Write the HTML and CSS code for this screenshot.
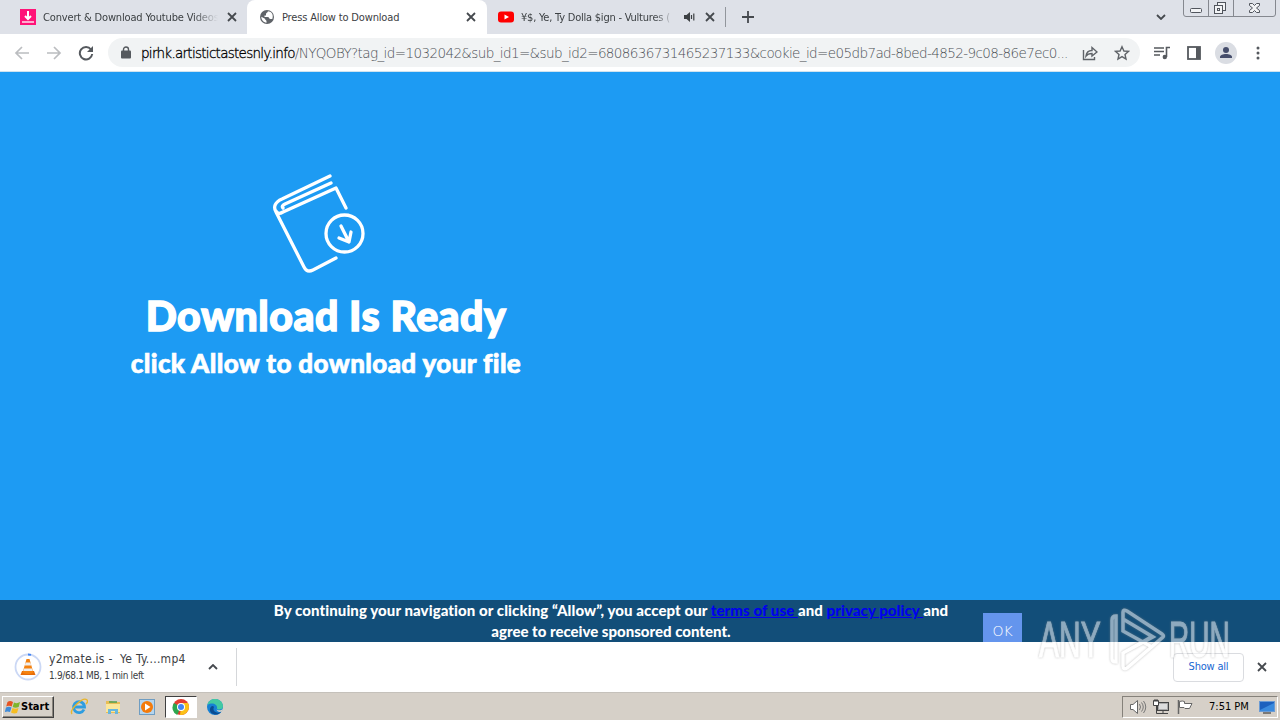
FILE: index.html
```html
<!DOCTYPE html>
<html lang="en">
<head>
    <meta charset="UTF-8">
    <meta name="viewport" content="width=device-width, initial-scale=1.0">
    <title>Press Allow to Download</title>
    <link rel="stylesheet" href="styles.css">
</head>
<body>
    <!-- Tabs -->
    <div class="tabs">
        <div class="tab tab-first">
            <svg class="favicon" width="16" height="16" viewBox="0 0 16 16"><rect width="16" height="16" fill="#ff1478"/><path d="M8 2v7M5 7l3 3 3-3" fill="none" stroke="#fff" stroke-width="2"/><path d="M2 13h12" stroke="#fff" stroke-width="1.3"/></svg>
            <span class="tab-title fade">Convert &amp; Download Youtube Videos</span>
            <svg class="close" width="10" height="10" viewBox="0 0 10 10"><path d="M1 1l8 8M9 1L1 9"/></svg>
        </div>
        <div class="tab tab-active">
            <svg class="favicon" width="16" height="16" viewBox="0 0 16 16"><circle cx="8" cy="8" r="7" fill="#5f6368"/><path d="M9 2.300C8.500 4 7 3.500 7 5v1.500H5.500V8H9c1 0 1 2 2.500 2h1.800c1-2.500.5-6-2.300-7.200zM2.300 7.800c0 3 2 5.500 5.200 6v-1.600C7.500 11 6 11 6 9.800z" fill="#fff"/></svg>
            <span class="tab-title">Press Allow to Download</span>
            <svg class="close" width="10" height="10" viewBox="0 0 10 10"><path d="M1 1l8 8M9 1L1 9"/></svg>
        </div>
        <div class="tab tab-last">
            <svg class="favicon" width="16" height="16" viewBox="0 0 16 16"><rect y="2.500" width="16" height="11" rx="3" fill="#f00"/><path d="M6.500 5.500v5L11 8z" fill="#fff"/></svg>
            <span class="tab-title fade">¥$, Ye, Ty Dolla $ign - Vultures (</span>
            <svg class="sound" width="12" height="10" viewBox="0 0 12 10"><path d="M0 3h2.500L6 0v10L2.500 7H0z" fill="#3c4043"/><path d="M7.500 3v4M9.800 1.500v7" stroke="#3c4043" stroke-width="1.200"/></svg>
            <svg class="close" width="10" height="10" viewBox="0 0 10 10"><path d="M1 1l8 8M9 1L1 9"/></svg>
        </div>
        <div class="tab-divider"></div>
        <svg class="new-tab" width="12" height="12" viewBox="0 0 12 12"><path d="M6 0v12M0 6h12"/></svg>
        <svg class="tab-search" width="10" height="6" viewBox="0 0 10 6"><path d="M1 1l4 4 4-4"/></svg>
        <svg class="window-buttons" width="94" height="17" viewBox="0 0 94 17">
            <path d="M.5 0v14q0 2.500 2.500 2.500h87q2.500 0 2.500-2.500V0M25.500 0v16M50.500 0v16" fill="none" stroke="#85888f"/>
            <g fill="#f2f3f5" stroke="#51555d">
                <rect x="7.500" y="8.500" width="11" height="4" rx="1"/>
                <rect x="34.500" y="2.500" width="8" height="8"/><rect x="31.500" y="5.500" width="8" height="8"/><rect x="34.500" y="8.500" width="2" height="2"/>
                <path d="M66.500 3.500h3l2 2 2-2h3v2l-3 2.500 3 2.500v2h-3l-2-2-2 2h-3v-2l3-2.500-3-2.500z"/>
            </g>
        </svg>
    </div>

    <!-- Address bar -->
    <div class="toolbar">
        <svg class="nav" width="16" height="16" viewBox="0 0 16 16"><path d="M15 8H2M8 2L2 8l6 6"/></svg>
        <svg class="nav" width="16" height="16" viewBox="0 0 16 16"><path d="M1 8h13M8 2l6 6-6 6"/></svg>
        <svg class="reload" width="16" height="16" viewBox="0 0 16 16"><path d="M13 4.500A6.200 6.200 0 1 0 14.200 9" fill="none" stroke="#55595e" stroke-width="2"/><path d="M15 1v6H9z" fill="#55595e"/></svg>
        <div class="address">
            <svg width="10" height="13" viewBox="0 0 10 13"><rect y="4.500" width="10" height="8" rx="1" fill="#55595e"/><path d="M2.500 5V3.500a2.500 2.500 0 0 1 5 0V5" fill="none" stroke="#55595e" stroke-width="1.400"/></svg>
            <div class="url"><span class="host">pirhk.artistictastesnly.info</span><span class="path">/NYQOBY?tag_id=1032042&amp;sub_id1=&amp;sub_id2=6808636731465237133&amp;cookie_id=e05db7ad-8bed-4852-9c08-86e7ec0...</span></div>
            <svg class="share" width="16" height="16" viewBox="0 0 16 16"><path d="M1.500 5v9.500h11V12M4 11c.5-4 2.500-5.500 6-5.500V2.500L15 7l-5 4V8.500c-3 0-4.500.5-6 2.500z"/></svg>
            <svg class="star" width="16" height="16" viewBox="0 0 16 16"><path d="M8 1.800l1.900 4.200 4.500.4L11 9.500l1 4.500-4-2.400L4 14l1-4.500L1.600 6.400l4.500-.4z"/></svg>
        </div>
        <svg class="tool-icon" width="18" height="16" viewBox="0 0 18 16"><path d="M1 3h10M1 6.500h10M1 10h6M13.500 12V2.500H17" fill="none" stroke="#55595e" stroke-width="1.600"/><circle cx="11.800" cy="12" r="2.200" fill="#55595e"/></svg>
        <svg class="tool-icon" width="14" height="14" viewBox="0 0 14 14"><rect x="1" y="1" width="12" height="12" fill="#fff" stroke="#55595e" stroke-width="1.800"/><path d="M9 1h4v12H9z" fill="#55595e"/></svg>
        <svg class="avatar" width="22" height="22" viewBox="0 0 22 22"><circle cx="11" cy="11" r="11" fill="#dadde3"/><circle cx="11" cy="8" r="3" fill="#454d6b"/><path d="M5 16v-1c0-4 12-4 12 0v1z" fill="#454d6b"/></svg>
        <svg class="menu" width="4" height="14" viewBox="0 0 4 14"><g fill="#55595e"><circle cx="2" cy="2" r="1.500"/><circle cx="2" cy="7" r="1.500"/><circle cx="2" cy="12" r="1.500"/></g></svg>
    </div>

    <!-- Page -->
    <div class="page">
        <div class="message">
            <svg class="book" width="94" height="100" viewBox="0 0 94 100">
                <path d="M58 3L10 26C3 29 1 34 4 39l28 55c2 4 5 5 9 3l23-12M4 38q2 4 7 1l53-24 10 20M59 10L13 31q-4 2-2 4"/>
                <circle cx="72.500" cy="60.500" r="18.500"/>
                <path d="M69 53l8 16M67 65l10 4 2-10"/>
            </svg>
            <h1>Download Is Ready</h1>
            <h2>click Allow to download your file</h2>
        </div>
        <div class="consent">
            <p><span class="line line-top">By continuing your navigation or clicking “Allow”, you accept our <a href="#">terms of use </a>and <a href="#">privacy policy </a>and</span><span class="line line-bottom">agree to receive sponsored content.</span></p>
            <button class="ok">OK</button>
        </div>
    </div>

    <!-- Downloads -->
    <div class="downloads">
        <svg class="vlc" width="28" height="28" viewBox="0 0 28 28">
            <circle cx="14" cy="14" r="12.500" fill="#fff" stroke="#cbd8f5" stroke-width="1.800"/><path d="M14 1.500a12.500 12.500 0 0 1 3 .4" fill="none" stroke="#4285f4" stroke-width="1.800"/>
            <path d="M8 18h12l1.500 4h-15z" fill="#e76b08"/><path d="M12.500 6h3l4 14q-5.500 2-11 0z" fill="#f58210"/><path d="M11.600 9.500h4.800l.8 3h-6.400zM10 15.500h8l.7 2.500H9.300z" fill="#eee"/>
        </svg>
        <div class="file">
            <div class="file-name">y2mate.is -&nbsp; Ye Ty....mp4</div>
            <div class="file-info">1.9/68.1 MB, 1 min left</div>
        </div>
        <svg class="chevron" width="10" height="6" viewBox="0 0 10 6"><path d="M1 5l4-4 4 4"/></svg>
        <div class="divider"></div>
        <button class="show-all">Show all</button>
        <svg class="shelf-close" width="10" height="10" viewBox="0 0 10 10"><path d="M1 1l8 8M9 1L1 9"/></svg>
    </div>

    <!-- Taskbar -->
    <div class="taskbar">
        <div class="start">
            <svg width="16" height="16" viewBox="0 0 16 16"><path d="M2.500 3Q5 1 8 3L6.700 7.500Q4 6 1.200 7.500z" fill="#e65322"/><path d="M9 3.500q3 1.500 6-.5L13.700 8Q10.500 9.500 7.700 8z" fill="#7eb52c"/><path d="M1 8.500q3-1.500 5.500 0L5 13Q2.500 12-.2 13z" fill="#3f8bd8"/><path d="M7.500 9q3 1.500 6 0L12 14q-3 1-6-.5z" fill="#f6bd22"/></svg>
            <span>Start</span>
        </div>
        <svg class="task" width="18" height="18" viewBox="0 0 18 18"><path d="M14 11.500A5.500 5.500 0 1 1 14.500 9H5" fill="none" stroke="#2e9de0" stroke-width="2.800"/><path d="M2 16C-1 12 13-2 17 2c1 1 0 3-1 4" fill="none" stroke="#e9b62b" stroke-width="1.400"/></svg>
        <svg class="task" width="18" height="18" viewBox="0 0 18 18"><path d="M2 3h6l1 1h7v11H2z" fill="#e8bd55"/><path d="M2 6h14v8H2z" fill="#fbe79b"/><path d="M4 16v-5h10v5h-3v-3H7v3z" fill="#68b7dd"/><path d="M5 4h8" stroke="#4f9f53" stroke-width="1.500"/></svg>
        <svg class="task" width="18" height="18" viewBox="0 0 18 18"><rect x="1.500" y="1.500" width="15" height="15" fill="#b5d5ee" stroke="#6f9dc2"/><circle cx="9" cy="9" r="6" fill="#f47b0b"/><path d="M7 5.500v7L12.500 9z" fill="#fff"/></svg>
        <div class="task-active">
            <svg width="18" height="18" viewBox="0 0 18 18"><circle cx="9" cy="9" r="8" fill="#e43d30"/><path d="M9 9L5.200 17A8 8 0 0 1 2 5z" fill="#2da64f"/><path d="M9 9h8a8 8 0 0 1-9 8z" fill="#fbc116"/><path d="M9 5h7a8 8 0 0 1 1 4l-5 1z" fill="#fbc116"/><circle cx="9" cy="9" r="4" fill="#fff"/><circle cx="9" cy="9" r="3" fill="#4285f4"/></svg>
        </div>
        <svg class="task" width="18" height="18" viewBox="0 0 18 18"><circle cx="9" cy="9" r="8" fill="#1680d4"/><path d="M1.500 7C3-1 16-1 17 8c0 4-4 4-6 3 1-5-5-7-9.500-4z" fill="#43c9a2"/><path d="M8 9c-2 4 2 7 7 5-4 5-12 2-11-3 .5-3 3-4 4-2z" fill="#0b4c92"/><path d="M10.500 11.500c2 1.500 5 1 6.500-1l-1 3c-3 1-5 0-5.500-2z" fill="#d6d2c9"/></svg>
        <div class="tray">
            <svg width="18" height="16" viewBox="0 0 18 16"><path d="M1.500 5.500H4L8.500 1.500v13L4 10.500H1.500z" fill="#fff" stroke="#666"/><path d="M10.500 5q2 3 0 6M12.500 3.500q3.500 4.500 0 9M14.500 2q4.500 6 0 12" fill="none" stroke="#777"/></svg>
            <svg width="18" height="16" viewBox="0 0 18 16"><rect x="4.500" y="3.500" width="11" height="8" fill="#aaa" stroke="#444"/><rect x="6" y="5" width="8" height="5" fill="#ddd"/><path d="M7 14.500h8M10 12v2M3.500 6v8.500H8" stroke="#444" fill="none"/><path d="M.5 1.500h5v5h-5zM2 0v3M4 0v3" fill="#fff" stroke="#444"/></svg>
            <svg width="18" height="16" viewBox="0 0 18 16"><path d="M1.500 1v14" stroke="#666" stroke-width="1.500"/><path d="M2.500 2.500q3-1 5 0v2h7.500l-2.500 5H8L7 8.500H2.500z" fill="#fff" stroke="#666"/></svg>
            <span class="clock">7:51 PM</span>
            <svg class="desktop" width="16" height="14" viewBox="0 0 16 14"><rect x=".5" y="1.500" width="15" height="10" fill="#1d61be" stroke="#6b9bd4"/><path d="M1 10l14-7v8H1z" fill="#3b8bde"/><path d="M4 13h8" stroke="#222"/></svg>
        </div>
    </div>

    <!-- Watermark -->
    <div class="watermark">
        <span class="any">ANY</span>
        <svg width="60" height="66" viewBox="0 0 60 66"><path d="M8 55V9q-4 0-4 4v39q0 3 4 3zM15 5v19l29 16M15 5q0-3 4-1l35 23q3 2 0 4L19 61q-4 2-4-2V46l30-16-30-18M15 46l30-17"/></svg>
        <span class="run">RUN</span>
    </div>
</body>
</html>
```
FILE: styles.css
```css
* {
    box-sizing: border-box;
}
body {
    margin: 0;
    width: 1280px;
    height: 720px;
    overflow: hidden;
    display: flex;
    flex-direction: column;
    font-family: "DejaVu Sans Condensed", "DejaVu Sans", sans-serif;
    font-size: 11px;
    color: #3c4043;
    position: relative;
}
svg {
    flex: none;
    display: block;
}
/* Tabs */
.tabs {
    height: 34px;
    background-color: #dee1e8;
    display: flex;
    align-items: center;
}
.tab {
    height: 34px;
    display: flex;
    align-items: center;
}
.tab-first {
    width: 247px;
    padding: 0 10px 0 20px;
}
.tab-active {
    width: 240px;
    padding: 0 11px 0 12px;
    background-color: #fff;
    border-radius: 8px 8px 0 0;
}
.tab-last {
    width: 238px;
    padding: 0 10px 0 11px;
}
.tab-title {
    flex: 1;
    margin-left: 7px;
    white-space: nowrap;
    overflow: hidden;
    letter-spacing: -0.16px;
}
.tab-last .tab-title {
    letter-spacing: -0.22px;
}
.fade {
    -webkit-mask-image: linear-gradient(to right, #000 86%, transparent);
    mask-image: linear-gradient(to right, #000 86%, transparent);
}
.close {
    margin-left: 9px;
}
.sound {
    margin-left: 9px;
}
.close path, .shelf-close path, .new-tab path, .tab-search path, .chevron path {
    fill: none;
    stroke: #45494e;
    stroke-width: 1.8;
}
.tab-divider {
    width: 1px;
    height: 20px;
    background-color: #92969c;
}
.new-tab {
    margin-left: 16px;
}
.tab-search {
    margin-left: 402px;
}
.window-buttons {
    align-self: flex-start;
    margin-left: 17px;
}
/* Address bar */
.toolbar {
    height: 38px;
    background-color: #fff;
    border-bottom: 1px solid #cfe3ef;
    display: flex;
    align-items: center;
    padding-left: 14px;
}
.nav {
    margin-right: 16px;
}
.nav path {
    fill: none;
    stroke: #bbbdc0;
    stroke-width: 1.7;
}
.reload {
    margin-right: 14px;
}
.address {
    width: 1032px;
    height: 29px;
    border-radius: 15px;
    background-color: #f1f3f4;
    display: flex;
    align-items: center;
    padding: 0 10px 0 13px;
}
.url {
    flex: 1;
    min-width: 0;
    margin-left: 10px;
    font-family: "DejaVu Sans", sans-serif;
    font-weight: 200;
    font-size: 13.5px;
    white-space: nowrap;
}
.host {
    color: #000;
    letter-spacing: -0.72px;
    -webkit-text-stroke: 0.3px #000;
}
.path {
    color: #4c5055;
    letter-spacing: -0.6px;
}
.share, .star {
    margin-left: 16px;
}
.share path, .star path {
    fill: none;
    stroke: #5f6368;
    stroke-width: 1.4;
}
.tool-icon {
    margin-left: 13px;
}
.tool-icon + .tool-icon {
    margin-left: 16px;
}
.avatar {
    margin-left: 14px;
}
.menu {
    margin-left: 19px;
}
/* Page */
.page {
    height: 570px;
    background-color: #1d9bf3;
    display: flex;
    flex-direction: column;
    justify-content: space-between;
    font-family: Lato, sans-serif;
    font-variant-ligatures: none;
    color: #fff;
}
.message {
    width: 652px;
    padding-top: 101px;
    text-align: center;
}
.book {
    margin-left: 272px;
}
.book path, .book circle {
    fill: none;
    stroke: #fff;
    stroke-width: 3.3;
    stroke-linecap: round;
    stroke-linejoin: round;
}
h1 {
    margin: 17px 0 0;
    font-size: 41px;
    line-height: 52px;
    font-weight: 900;
    letter-spacing: 0.5px;
    -webkit-text-stroke: 1.4px #fff;
    stroke-linejoin: round;
    white-space: nowrap;
}
h2 {
    margin: 4px 0 0;
    font-size: 26px;
    line-height: 34px;
    font-weight: 900;
    letter-spacing: 0.38px;
    -webkit-text-stroke: 0.7px #fff;
    white-space: nowrap;
}
.consent {
    height: 42px;
    background-color: #124e79;
    display: flex;
    overflow: hidden;
}
.consent p {
    margin: 0 0 0 273px;
    width: 676px;
    font-size: 15px;
    line-height: 21px;
    font-weight: 900;
    text-align: center;
}
.line {
    display: block;
    white-space: nowrap;
}
.line-top {
    letter-spacing: 0.08px;
}
.consent a {
    color: #00e;
}
.ok {
    margin: 13px 0 0 34px;
    width: 39px;
    height: 36px;
    flex: none;
    padding: 0;
    border: none;
    background-color: #6495ed;
    color: #fff;
    font-family: "DejaVu Sans", sans-serif;
    font-weight: 200;
    font-size: 14px;
}
/* Downloads */
.downloads {
    height: 50px;
    background-color: #fff;
    display: flex;
    align-items: center;
    padding-left: 14px;
}
.file {
    width: 145px;
    margin-left: 7px;
    white-space: nowrap;
}
.file-name {
    font-size: 12px;
    line-height: 17px;
    letter-spacing: 0.27px;
}
.file-info {
    font-size: 10px;
    line-height: 16px;
    letter-spacing: -0.35px;
}
.chevron {
    margin-left: 14px;
}
.divider {
    width: 1px;
    height: 38px;
    margin-left: 18px;
    background-color: #d5d7da;
}
.show-all {
    width: 71px;
    height: 29px;
    margin-left: 936px;
    padding: 0 0 2px;
    border: 1px solid #dadce0;
    border-radius: 4px;
    background-color: #fff;
    color: #1967d2;
    font-family: inherit;
    font-size: 11px;
    letter-spacing: -0.2px;
}
.shelf-close {
    margin-left: 13px;
}
/* Taskbar */
.taskbar {
    height: 28px;
    background-color: #d6d0c8;
    border-top: 1px solid #c5c1bb;
    display: flex;
    align-items: center;
    padding-left: 2px;
}
.start {
    width: 52px;
    height: 22px;
    margin-right: 16px;
    display: flex;
    align-items: center;
    padding-left: 2px;
    border: 1px solid #fff;
    border-right-color: #404040;
    border-bottom-color: #404040;
    box-shadow: inset -1px -1px #8a857d;
    color: #000;
    font-weight: bold;
}
.task {
    margin-right: 16px;
}
.task-active {
    width: 32px;
    height: 22px;
    margin: 0 9px 0 -7px;
    display: flex;
    align-items: center;
    justify-content: center;
    background-color: #fff;
    border: 1px solid #404040;
    border-right-color: #fff;
    border-bottom-color: #fff;
}
.tray {
    width: 156px;
    height: 22px;
    margin-left: auto;
    margin-right: 2px;
    display: flex;
    align-items: center;
    gap: 6px;
    padding-left: 6px;
    border: 1px solid #85817a;
    border-right-color: #fff;
    border-bottom-color: #fff;
}
.clock {
    width: 41px;
    margin-left: 8px;
    color: #000;
    white-space: nowrap;
}
.desktop {
    margin-left: 3px;
}
/* Watermark */
.watermark {
    position: absolute;
    left: 1039px;
    top: 607px;
    display: flex;
    align-items: center;
    opacity: 0.52;
    color: #fff;
    font-family: "Liberation Sans", sans-serif;
    font-size: 50px;
    filter: drop-shadow(0 0 1px #888);
}
.watermark span {
    width: 62px;
    line-height: 66px;
    transform: scaleX(0.6);
    transform-origin: left;
    -webkit-text-stroke: 1px #fff;
}
.watermark svg {
    margin-left: 7px;
}
.watermark .run {
    margin-left: 1px;
    transform: scaleX(0.56);
}
.watermark path {
    fill: none;
    stroke: #fff;
    stroke-width: 3.5;
}
```
